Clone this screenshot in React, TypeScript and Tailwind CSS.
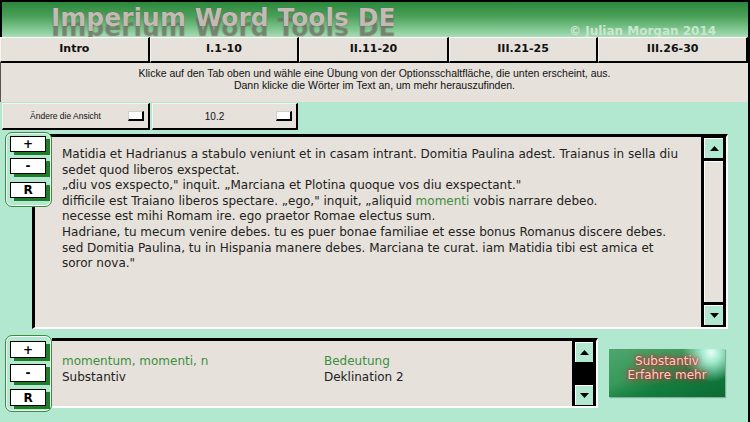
import React from "react";

const tabs = ["Intro", "I.1-10", "II.11-20", "III.21-25", "III.26-30"];

function Arrow({ up }: { up?: boolean }) {
  return (
    <svg width="9" height="5" viewBox="0 0 9 5">
      {up ? <polygon points="4.5,0 9,5 0,5" fill="#000" /> : <polygon points="0,0 9,0 4.5,5" fill="#000" />}
    </svg>
  );
}

function ScrollButton({ up }: { up?: boolean }) {
  return (
    <div className="h-[20px] bg-[#b2e8cf] border-t border-l border-white flex items-center justify-center">
      <Arrow up={up} />
    </div>
  );
}

function PanelButton({ label, className }: { label: string; className?: string }) {
  return (
    <div
      className={
        "w-[36px] h-[16px] bg-white border-[1.5px] border-black shadow-[4px_3px_0_#1f7a2a] flex items-center justify-center text-[12px] font-bold leading-none text-black " +
        (className ?? "")
      }
    >
      {label}
    </div>
  );
}

function SidePanel({ className, tall }: { className: string; tall?: boolean }) {
  return (
    <div
      className={
        "w-[47px] rounded-[7px] border-[1.5px] border-[#3c8c3c] bg-[#b2e8cf] shadow-[inset_0_0_0_1px_#f4fff8] flex flex-col pl-[4px] " +
        className
      }
    >
      <PanelButton label="+" className={tall ? "mt-[5px] h-[17px]" : "mt-[3px]"} />
      <PanelButton label="-" className={tall ? "mt-[6px] h-[18px]" : "mt-[6px]"} />
      <PanelButton label="R" className={tall ? "mt-[7px] h-[17px]" : "mt-[8px]"} />
    </div>
  );
}

function Dropdown({ label, textClass, width }: { label: string; textClass: string; width: string }) {
  return (
    <div
      className={
        "h-[27px] bg-[#e6e1db] border-t border-l border-t-[#f6f3f0] border-l-[#f6f3f0] border-r-2 border-b-2 border-black flex items-center pr-[4px] " +
        width
      }
    >
      <span className={"flex-1 text-center font-['Liberation_Sans',sans-serif] text-[#111] " + textClass}>{label}</span>
      <span className="w-[16px] h-[10px] bg-white border-t border-l border-[#cfcfcf] border-r-2 border-b-2 border-r-black border-b-black" />
    </div>
  );
}

export default function App() {
  return (
    <div className="w-[750px] h-[422px] overflow-hidden bg-[#b2e8cf] border-r-2 border-black font-['DejaVu_Sans',sans-serif] flex flex-col">
      {/* Header */}
      <div className="relative h-[37px] shrink-0 border-t-2 border-l-2 border-black bg-[linear-gradient(180deg,#2a883b_0%,#4a9f58_40%,#7cc48c_75%,#a9ddb7_100%)] overflow-hidden">
        <div className="absolute left-[49px] top-[1px] text-[25px] font-bold leading-[30px] text-[#c3bbb3] [text-shadow:0_0_1px_#4a4a4a,0_10px_1px_rgba(110,105,95,0.75)] whitespace-nowrap">
          Imperium Word Tools DE
        </div>
        <div className="absolute left-[567px] top-[22px] text-[12px] font-bold leading-[14px] text-[#cbe6cf] whitespace-nowrap">
          © Julian Morgan 2014
        </div>
      </div>

      {/* Tabs */}
      <div className="flex h-[26px] shrink-0">
        {tabs.map((t) => (
          <div
            key={t}
            className="flex-1 bg-[#e6e1db] border-t border-l border-t-white border-l-[#f6f3f0] border-r-2 border-b-2 border-black flex items-center justify-center text-[11px] font-bold text-[#111]"
          >
            {t}
          </div>
        ))}
      </div>

      {/* Instructions */}
      <div className="h-[39px] shrink-0 bg-[#e6e1db] border-l border-[#555] pt-[4px] text-center font-['Liberation_Sans',sans-serif] text-[10.5px] leading-[12px] text-[#111]">
        <p>Klicke auf den Tab oben und wähle eine Übung von der Optionsschaltfläche, die unten erscheint, aus.</p>
        <p>Dann klicke die Wörter im Text an, um mehr herauszufinden.</p>
      </div>

      {/* Dropdowns */}
      <div className="h-[30px] shrink-0 flex gap-[2px] pl-[2px] pt-[1px]">
        <Dropdown label="Ändere die Ansicht" textClass="text-[8.5px]" width="w-[148px]" />
        <Dropdown label="10.2" textClass="text-[10px]" width="w-[146px]" />
      </div>

      {/* Main text */}
      <div className="relative h-[197px] shrink-0 pl-[32px] pr-[20px] pt-[2px]">
        <div className="h-[195px] flex bg-[#e6e1db] border-t-[3px] border-l-[3px] border-black border-r-2 border-b-2 border-r-white border-b-white">
          <div className="flex-1 pl-[27px] pt-[10px] text-[12px] leading-[15.6px] text-[#222] whitespace-nowrap">
            <div>Matidia et Hadrianus a stabulo veniunt et in casam intrant. Domitia Paulina adest. Traianus in sella diu</div>
            <div>sedet quod liberos exspectat.</div>
            <div>„diu vos exspecto," inquit. „Marciana et Plotina quoque vos diu exspectant."</div>
            <div>
              difficile est Traiano liberos spectare. „ego," inquit, „aliquid{" "}
              <span className="text-[#3d8f3d]">momenti</span> vobis narrare debeo.
            </div>
            <div>necesse est mihi Romam ire. ego praetor Romae electus sum.</div>
            <div>Hadriane, tu mecum venire debes. tu es puer bonae familiae et esse bonus Romanus discere debes.</div>
            <div>sed Domitia Paulina, tu in Hispania manere debes. Marciana te curat. iam Matidia tibi est amica et</div>
            <div>soror nova."</div>
          </div>
          <div className="w-[25px] bg-black px-[3px] pt-[1px] pb-[2px] flex flex-col gap-[3px]">
            <ScrollButton up />
            <div className="flex-1 bg-[#e6e1db] border-l border-t border-white" />
            <ScrollButton />
          </div>
        </div>
        <SidePanel className="absolute left-[5px] top-0 h-[75px]" />
      </div>

      {/* Bottom info */}
      <div className="relative mt-[9px] h-[70px] shrink-0 flex">
        <div className="ml-[52px] w-[546px] h-[70px] flex bg-[#e6e1db] border-t-[3px] border-black border-r-2 border-b-2 border-r-white border-b-white">
          <div className="flex-1 flex pt-[12px] text-[12px] leading-[16px] text-[#222]">
            <div className="w-[272px] pl-[10px]">
              <div className="text-[#3d8f3d]">momentum, momenti, n</div>
              <div>Substantiv</div>
            </div>
            <div>
              <div className="text-[#3d8f3d]">Bedeutung</div>
              <div>Deklination 2</div>
            </div>
          </div>
          <div className="w-[24px] bg-black px-[3px] pt-[1px] pb-[1px] flex flex-col justify-between">
            <ScrollButton up />
            <ScrollButton />
          </div>
        </div>
        <div className="ml-[11px] mt-[11px] w-[116px] h-[48px] bg-[radial-gradient(circle_at_88%_8%,#e6fff6_0%,#9fe8cc_9%,transparent_26%),linear-gradient(160deg,#4fa56f_0%,#389a5a_40%,#137f40_62%,#0b6a33_100%)] shadow-[1px_1px_1px_rgba(0,0,0,0.25)] flex flex-col items-center pt-[5px] text-[12px] leading-[14px] text-[#f6d2d2] [text-shadow:0_0_4px_#d23a3a,0_0_8px_#c83030,0_0_2px_#b02020]">
          <span>Substantiv</span>
          <span>Erfahre mehr</span>
        </div>
        <SidePanel className="absolute left-[5px] top-[-3px] h-[77px]" tall />
      </div>
    </div>
  );
}
